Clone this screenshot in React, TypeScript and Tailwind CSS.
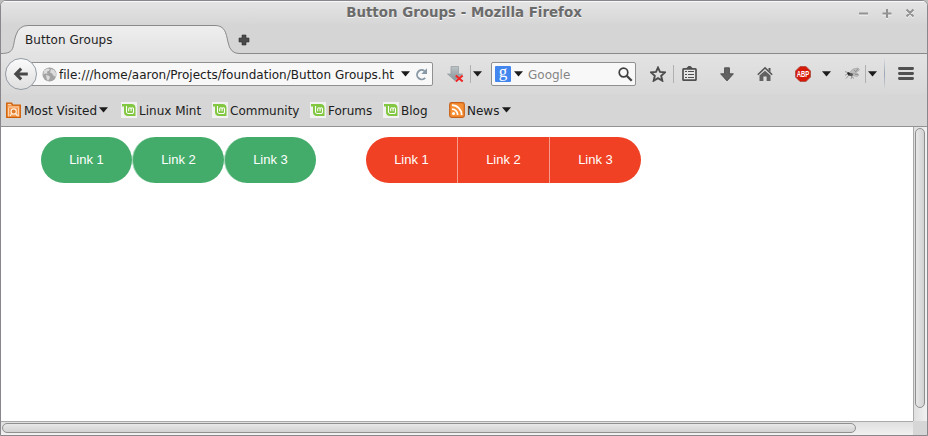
import React from "react";

const Caret = ({ className = "" }: { className?: string }) => (
  <svg width="9" height="6" viewBox="0 0 9 6" className={`shrink-0 ${className}`}>
    <path d="M0 .3h9L4.500 5.500z" fill="#1c1c1c" />
  </svg>
);

const Separator = ({ className = "" }: { className?: string }) => (
  <div className={`h-[18px] w-px shrink-0 bg-[#b0b0b0] ${className}`} />
);

const BackIcon = () => (
  <svg width="16" height="16" viewBox="0 0 16 16">
    <path d="M8.200 2.600L2.800 8l5.400 5.400M3 8h11.800" fill="none" stroke="#484848" strokeWidth="3" />
  </svg>
);

const GlobeIcon = () => (
  <svg width="15" height="15" viewBox="0 0 15 15" className="shrink-0">
    <circle cx="7.500" cy="7.500" r="7" fill="#a3a3a3" />
    <path d="M2 3.500l3-2 3 .4-1 1.800-2 1 .4 2-2.400-.3-1.600 1.200zM4 8l3.400 1 .5 2-2 3-1.300-2.500zM9 2l3 1 2 3-.3 4-2.400-1.400-1.200-2L8 5.400z" fill="#dcdcdc" />
  </svg>
);

const ReloadIcon = () => (
  <svg width="13" height="13" viewBox="0 0 13 13" className="shrink-0">
    <path d="M9.500 2.900A4.700 4.700 0 1 0 10.200 9.900" fill="none" stroke="#8999a6" strokeWidth="1.900" />
    <path d="M12 .3v5.800H6.300z" fill="#8999a6" />
  </svg>
);

const PluginDownloadIcon = () => (
  <svg width="17" height="18" viewBox="0 0 17 18" className="shrink-0">
    <defs>
      <linearGradient id="steel" x1="0" y1="0" x2="0" y2="1">
        <stop offset="0" stopColor="#bdc3c6" />
        <stop offset="1" stopColor="#87949a" />
      </linearGradient>
    </defs>
    <path d="M4 1.500h7.500v7.500H15.500l-7.700 6.500L.5 9H4z" fill="url(#steel)" stroke="#949ca0" strokeWidth=".7" />
    <path d="M8.800 10.500l6.900 6M15.700 10.500l-6.900 6" stroke="#f12525" strokeWidth="2" />
  </svg>
);

const SearchIcon = () => (
  <svg width="15" height="15" viewBox="0 0 15 15" className="shrink-0">
    <circle cx="5.500" cy="5.500" r="4.300" fill="none" stroke="#404040" strokeWidth="1.700" />
    <path d="M8.700 8.700l5 5" stroke="#404040" strokeWidth="2.300" />
  </svg>
);

const StarIcon = () => (
  <svg width="16" height="16" viewBox="0 0 16 16" className="shrink-0">
    <path d="M8 1.600l2 4.300 4.900.5-3.700 3.400 1.100 4.900L8 12.200l-4.300 2.500 1.100-4.900L1.100 6.400 6 5.900z" fill="none" stroke="#4c4c4c" strokeWidth="1.900" />
  </svg>
);

const ClipboardIcon = () => (
  <svg width="15" height="16" viewBox="0 0 15 16" className="shrink-0">
    <path d="M3.500 3L5.500 1 6.500 0h2l1 1L11.500 3z" fill="#505050" />
    <rect x="1" y="2.900" width="13" height="11.200" rx=".7" fill="#e5e5e5" stroke="#4f4f4f" strokeWidth="1.700" />
    <path d="M3 5.500h2M6 5.500h6M3 8.500h2M6 8.500h6M3 11.500h2M6 11.500h6" stroke="#4f4f4f" strokeWidth="1.200" />
  </svg>
);

const DownloadIcon = () => (
  <svg width="14" height="15" viewBox="0 0 14 15" className="shrink-0">
    <path d="M4.600.8h4.800v6h4L7 13.900.6 6.800h4z" fill="#626262" stroke="#4b4b4b" strokeWidth=".9" />
  </svg>
);

const HomeIcon = () => (
  <svg width="16" height="16" viewBox="0 0 16 16" className="shrink-0">
    <path d="M2.500 9.500L8 4.700l5.500 4.800V15H9.600v-4.500H6.400V15H2.500z" fill="#616161" />
    <path d="M.8 8.800L8 1.900l7.200 6.900" fill="none" stroke="#555" strokeWidth="1.500" />
    <path d="M11.500 2h2v4l-2-2z" fill="#555" />
  </svg>
);

const AdblockIcon = () => (
  <svg width="16" height="16" viewBox="0 0 16 16" className="shrink-0 overflow-visible">
    <path d="M5 .5h6L15.500 5v6L11 15.500H5L.5 11V5z" fill="#d71907" stroke="#a94b42" strokeWidth=".8" />
    <text x="8" y="11" textAnchor="middle" textLength="12.500" lengthAdjust="spacingAndGlyphs" fontFamily="Liberation Sans, sans-serif" fontWeight="bold" fontSize="8.500" fill="white">ABP</text>
  </svg>
);

const FlyIcon = () => (
  <svg width="17" height="16" viewBox="0 0 17 16" className="shrink-0">
    <path d="M6 6l3-3 5-1 1.500 2-4 3-6 1zM8 8l5-1 2 2-2 1.500-5-1z" fill="#bebebe" stroke="#999" strokeWidth=".5" />
    <path d="M1 5.500l4 1.500 3 3-1 3M5 9l-3 3.500M7 10l3 2.500M3 8L1 9.500M10 4l2 2M14 2.500l-2 3M11 8.500h3" fill="none" stroke="#808080" strokeWidth=".7" />
    <ellipse cx="6.500" cy="8.500" rx="2.600" ry="1.600" fill="#555" />
    <circle cx="4.500" cy="7.500" r="1.300" fill="#252525" />
  </svg>
);

const MenuIcon = () => (
  <svg width="16" height="14" viewBox="0 0 16 14" className="shrink-0">
    <path d="M1.400 1.500h13.200M1.400 6.500h13.200M1.400 11.500h13.200" stroke="#505050" strokeWidth="2.800" strokeLinecap="round" />
  </svg>
);

const FolderIcon = () => (
  <svg width="16" height="16" viewBox="0 0 16 16" className="shrink-0">
    <path d="M.7 1.200h5l1 2h7.600v12.100H.7z" fill="#f49a52" stroke="#ce5c00" strokeWidth="1.200" />
    <path d="M2 2.500h3M2 5h11M2.500 6v8.500M12.500 6v8.500" stroke="#ffd4ac" />
    <circle cx="7.700" cy="9.500" r="2.600" fill="#e17b2c" stroke="#fff1df" strokeWidth="1.100" />
    <path d="M5.800 11.500L4 14M9.600 11.500l2.100 2.500" stroke="#fff1df" strokeWidth="1.200" />
  </svg>
);

const MintIcon = () => (
  <svg width="16" height="16" viewBox="0 0 16 16" className="shrink-0">
    <path d="M0 0h16v16H0z" fill="#f1f1f1" />
    <path d="M1 2h9.500A4 4 0 0 1 14.500 6v8H7a4 4 0 0 1-4-4V4.500H1z" fill="#82c742" />
    <path d="M5.500 4v5A2 2 0 0 0 7.500 11.500h3.500A1.500 1.500 0 0 0 12.500 10V7a1.200 1.200 0 0 0-2.400 0v2.300M10.100 7a1.200 1.200 0 0 0-2.400 0v2.300" fill="none" stroke="#fff" strokeWidth="1.100" />
  </svg>
);

const RssIcon = () => (
  <svg width="16" height="16" viewBox="0 0 16 16" className="shrink-0">
    <rect x=".7" y=".7" width="14.600" height="14.600" rx="1.800" fill="#f78f35" stroke="#c76119" strokeWidth="1.200" />
    <path d="M3 3.200a9.700 9.700 0 0 1 9.700 9.700M3 7.200a5.700 5.700 0 0 1 5.700 5.700" fill="none" stroke="#fff" strokeWidth="1.800" />
    <circle cx="4.500" cy="11.500" r="1.500" fill="#fff" />
  </svg>
);

const Bookmark = ({ icon, label, className, caret = false }: { icon: React.ReactNode; label: string; className: string; caret?: boolean }) => (
  <div className={`flex shrink-0 items-center ${className}`}>
    {icon}
    <span className="ml-0.5 flex-1 whitespace-nowrap pt-px">{label}</span>
    {caret && <Caret />}
  </div>
);

const controlStrokes = "M12 12.500h9M35.500 12.500h9M40 8v9M59.500 8.500l7 7M66.500 8.500l-7 7";

const TitleBar = () => (
  <div className="flex h-[25px] shrink-0 items-center bg-linear-to-b from-[#e5e5e5] to-[#d5d5d5] shadow-[inset_0_1px_0_#f8f8f8]">
    <div className="w-20 shrink-0" />
    <div className="flex-1 text-center text-[13.400px] font-bold whitespace-nowrap text-[#6b6b6b] [text-shadow:0_1px_0_#f5f5f5]">Button Groups - Mozilla Firefox</div>
    <svg width="80" height="25" viewBox="0 0 80 25" className="shrink-0">
      <path d={controlStrokes} transform="translate(0 1)" fill="none" stroke="#f5f5f5" strokeWidth="2" />
      <path d={controlStrokes} fill="none" stroke="#929292" strokeWidth="2" />
    </svg>
  </div>
);

const TabStrip = () => (
  <div className="flex h-7 shrink-0 bg-[#d5d5d5]">
    <div className="grid h-7 w-[238px] shrink-0">
      <svg width="238" height="28" viewBox="0 0 238 28" className="col-start-1 row-start-1 overflow-visible">
        <defs>
          <linearGradient id="tab" x1="0" y1="0" x2="0" y2="1">
            <stop offset="0" stopColor="#efefef" />
            <stop offset="1" stopColor="#e3e3e3" />
          </linearGradient>
        </defs>
        <path d="M0 27.500C15 27.500 11 20 15 9Q18 -.5 27 -.5H214C224 -.5 225 7 227 16Q229 27.500 238 27.500V28H0z" fill="url(#tab)" />
        <path d="M0 27.500C15 27.500 11 20 15 9Q18 -.5 27 -.5H214C224 -.5 225 7 227 16Q229 27.500 238 27.500" fill="none" stroke="#898989" />
      </svg>
      <span className="z-10 col-start-1 row-start-1 pl-6 text-xs leading-[29px] tracking-[0.06px] text-[#242424]">Button Groups</span>
    </div>
    <div className="flex flex-1 items-start border-b border-[#898989] pt-2">
      <svg width="12" height="12" viewBox="0 0 12 12" className="-ml-px">
        <path d="M4 1h4v3h3v4H8v3H4V8H1V4h3z" fill="#4a4a4a" stroke="#303030" strokeWidth=".6" />
      </svg>
    </div>
  </div>
);

const NavigationBar = () => (
  <div className="flex h-10 shrink-0 items-center bg-linear-to-b from-[#e3e3e3] to-[#d8d8d8] text-xs text-[#202020]">
    <div className="z-10 ml-1 flex size-8 shrink-0 items-center justify-center rounded-full border border-[#939ba3] bg-linear-to-b from-[#fbfbfb] to-[#dfdfdf]"><BackIcon /></div>
    <div className="-ml-[7px] flex h-6 w-[403px] shrink-0 items-center rounded-xs border border-[#909090] bg-[#f8f8f8] pl-[11px]">
      <GlobeIcon />
      <span className="ml-0.5 w-[339px] shrink-0 overflow-hidden pt-px tracking-[0.02px] whitespace-nowrap">file:///home/aaron/Projects/foundation/Button Groups.ht</span>
      <Caret className="ml-[3px]" />
      <span className="ml-[5px]"><ReloadIcon /></span>
    </div>
    <span className="ml-3.5"><PluginDownloadIcon /></span>
    <Separator className="ml-1.5" />
    <Caret className="ml-0.5" />
    <div className="ml-[9px] flex h-6 w-[145px] shrink-0 items-center rounded-xs border border-[#909090] bg-[#f8f8f8] pl-[3px]">
      <div className="flex size-4 shrink-0 items-center justify-center rounded-[1px] bg-[#4387ee] pb-[5px] font-['Liberation_Serif',serif] text-[17px] leading-4 text-white">g</div>
      <Caret className="ml-[3px]" />
      <span className="ml-[5px] w-[90px] pt-px text-[#858585]">Google</span>
      <SearchIcon />
    </div>
    <span className="ml-3.5"><StarIcon /></span>
    <Separator className="ml-[7px]" />
    <span className="ml-2"><ClipboardIcon /></span>
    <span className="ml-[23px]"><DownloadIcon /></span>
    <span className="ml-[23px]"><HomeIcon /></span>
    <span className="ml-[22px]"><AdblockIcon /></span>
    <Caret className="ml-[11px]" />
    <span className="ml-[13px]"><FlyIcon /></span>
    <Separator className="ml-1" />
    <Caret className="ml-0.5" />
    <div className="ml-[7px] h-8 w-px bg-linear-to-b from-[#dedede] via-[#98a6b7] to-[#dadada]" />
    <span className="ml-[13px]"><MenuIcon /></span>
  </div>
);

const BookmarksBar = () => (
  <div className="flex h-[33px] shrink-0 items-center border-b border-[#929292] bg-[#d6d6d6] pl-[5px] text-xs text-[#202020]">
    <Bookmark icon={<FolderIcon />} label="Most Visited" className="w-[102px]" caret />
    <Bookmark icon={<MintIcon />} label="Linux Mint" className="ml-[13px] w-[91px]" />
    <Bookmark icon={<MintIcon />} label="Community" className="w-[98px]" />
    <Bookmark icon={<MintIcon />} label="Forums" className="w-[73px]" />
    <Bookmark icon={<MintIcon />} label="Blog" className="w-[66px]" />
    <Bookmark icon={<RssIcon />} label="News" className="w-[62px]" caret />
  </div>
);

const labels = ["Link 1", "Link 2", "Link 3"];

const buttonShape = (joined: boolean, index: number) => {
  if (!joined) return index > 0 ? "w-[92px] rounded-full border-l border-[#a1d6b5] bg-[#43ac6a]" : "w-[91px] rounded-full bg-[#43ac6a]";
  return index > 0 ? "w-[92px] border-l border-[#f79b8c]" : "w-[91px]";
};

const ButtonGroup = ({ joined = false }: { joined?: boolean }) => (
  <div className={`flex h-[46px] w-[275px] ${joined ? "rounded-full bg-[#f04124]" : ""}`}>
    {labels.map((label, index) => (
      <button key={label} className={`h-[46px] shrink-0 font-['Liberation_Sans',Arial,sans-serif] text-[13px] text-white ${buttonShape(joined, index)}`}>{label}</button>
    ))}
  </div>
);

export default function App() {
  return (
    <div className="h-[436px] w-[928px] bg-[#bdbdbd] font-['DejaVu_Sans',sans-serif]">
      <div className="flex h-full w-full flex-col overflow-hidden rounded-t-md border border-[#89878b] bg-white">
        <TitleBar />
        <TabStrip />
        <NavigationBar />
        <BookmarksBar />
        <div className="flex min-h-0 flex-1">
          <main className="flex min-w-0 flex-1 gap-[50px] bg-white pt-[10px] pl-10">
            <ButtonGroup />
            <ButtonGroup joined />
          </main>
          <div className="w-[14px] shrink-0 border-l border-[#aaa] bg-linear-to-r from-[#dfdfdf] to-[#f1f1f1] px-px pt-px">
            <div className="h-[280px] w-[10px] rounded-[5px] border border-[#8f8f8f] bg-linear-to-r from-[#e8e8e8] to-[#d2d2d2]" />
          </div>
        </div>
        <div className="flex h-[14px] shrink-0">
          <div className="flex-1 border-t border-[#aaa] bg-linear-to-b from-[#dfdfdf] to-[#f1f1f1] pt-px pl-px">
            <div className="h-[10px] w-[854px] rounded-[5px] border border-[#8f8f8f] bg-linear-to-b from-[#e8e8e8] to-[#d2d2d2]" />
          </div>
          <div className="w-[14px] bg-[#d6d6d6]" />
        </div>
      </div>
    </div>
  );
}
